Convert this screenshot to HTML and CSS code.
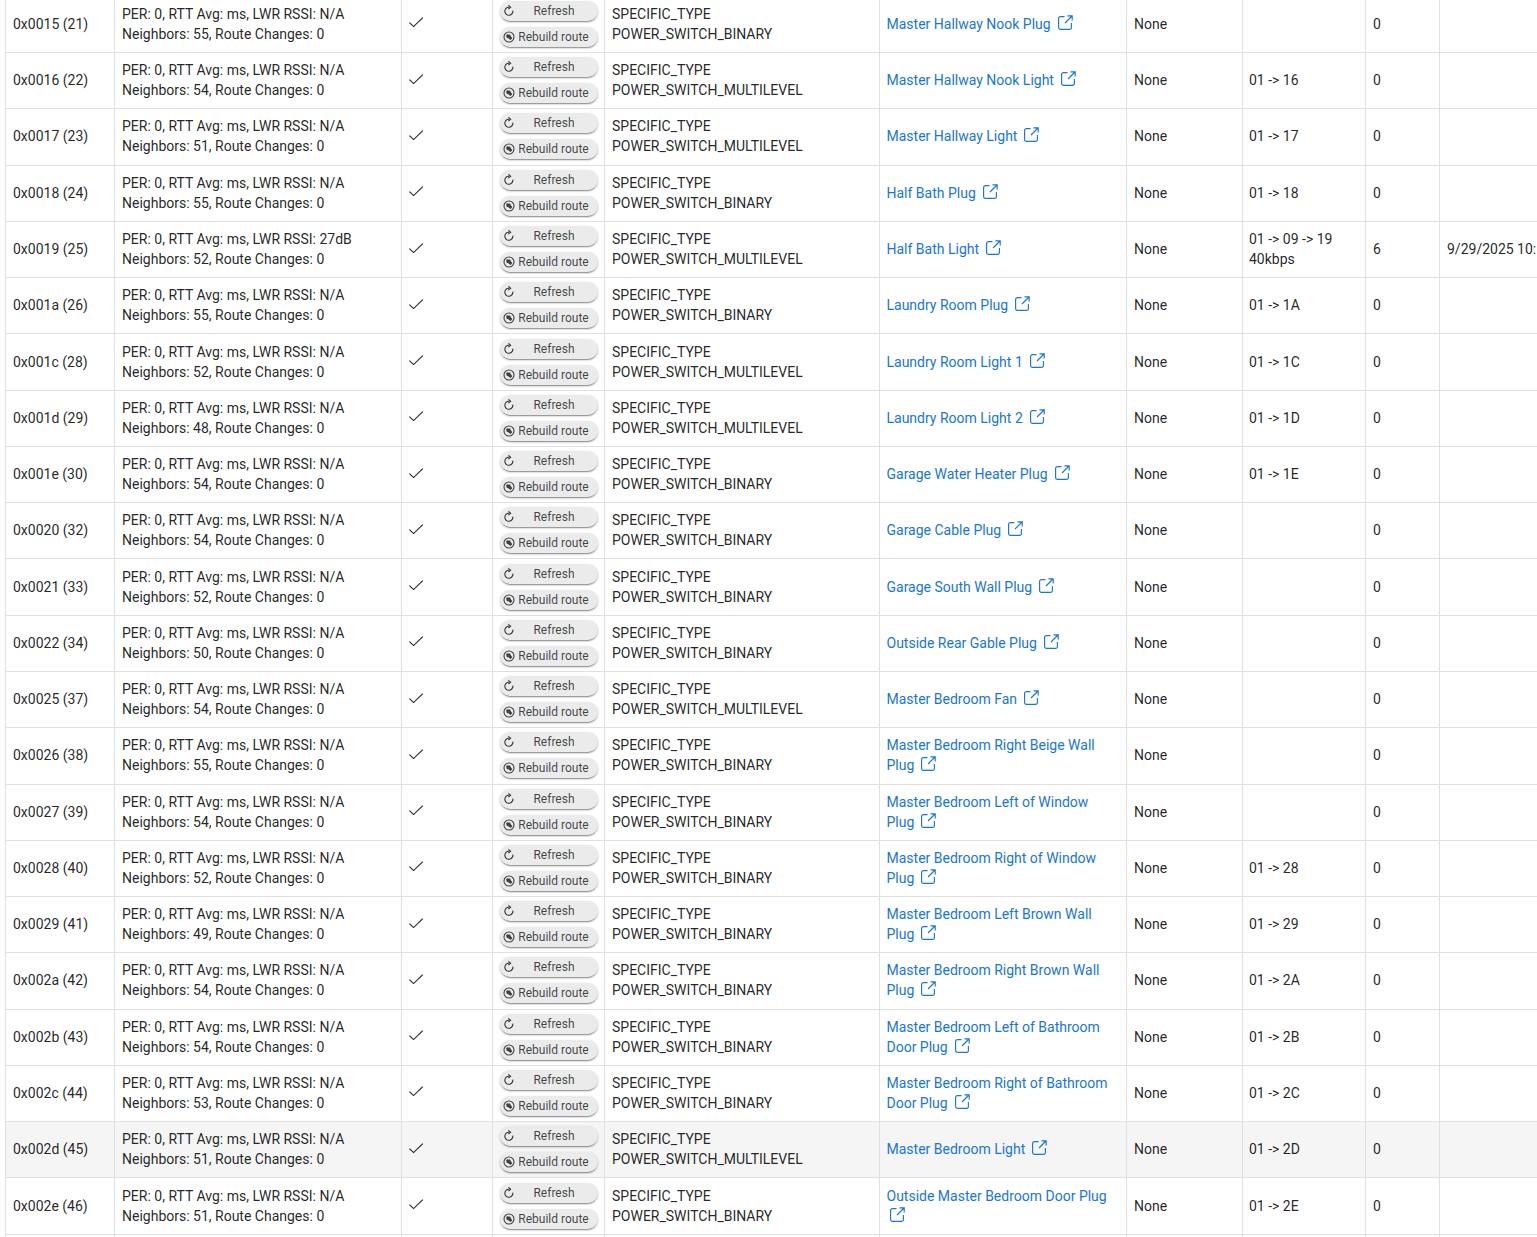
FILE: index.html
```html
<!DOCTYPE html>
<html lang="en">
<head>
<meta charset="utf-8">
<title>Z-Wave devices</title>
<link rel="stylesheet" href="styles.css">
</head>
<body>
<svg class="defs" width="0" height="0" aria-hidden="true">
  <symbol id="i-check" viewBox="0 0 16 16"><path d="M.4 8.6 4.6 12.6 13.8 3.6" fill="none" stroke="currentColor" stroke-width="1.1"/></symbol>
  <symbol id="i-refresh" viewBox="0 0 12 12"><path d="M9.8 5.6A4 4 0 1 1 6 2.3" fill="none" stroke="currentColor" stroke-width="1.1"/><path d="M5.4.4 7.6 2.3 5.4 4.1" fill="none" stroke="currentColor" stroke-width="1.1"/></symbol>
  <symbol id="i-build" viewBox="0 0 12 12"><circle cx="6" cy="6" r="5" fill="none" stroke="currentColor" stroke-width="1.1"/><path d="M2.9 4.4 4.3 3 5.2 3.9 5.6 3.2A1.9 1.9 0 0 1 7.7 5L9.4 7.2 7.4 9.1 5.2 7.2A2 2 0 0 1 3.1 5.5L3.9 5.2z" fill="currentColor"/></symbol>
  <symbol id="i-open" viewBox="0 0 15 15"><path d="M6.5 1.6H2.5A1.9 1.9 0 0 0 .6 3.5V12.5A1.9 1.9 0 0 0 2.5 14.4H11.5A1.9 1.9 0 0 0 13.4 12.5V8" fill="none" stroke="currentColor" stroke-width="1.15"/><path d="M7 8 14 1M9.5.8H14.2V5.5" fill="none" stroke="currentColor" stroke-width="1.15"/></symbol>
</svg>
<main class="viewport">
<table class="nodes">
<colgroup>
  <col class="c-id"><col class="c-stats"><col class="c-check"><col class="c-actions"><col class="c-type"><col class="c-name"><col class="c-sec"><col class="c-route"><col class="c-count"><col class="c-date">
</colgroup>
<tbody>
<tr><td>0x0015 (21)</td><td>PER: 0, RTT Avg: ms, LWR RSSI: N/A<br>Neighbors: 55, Route Changes: 0</td><td><svg class="check"><use href="#i-check"/></svg></td><td><div class="actions"><button class="btn"><svg class="ico ico-refresh"><use href="#i-refresh"/></svg><span class="lbl">Refresh</span></button><button class="btn"><svg class="ico"><use href="#i-build"/></svg><span class="lbl lbl-rebuild">Rebuild route</span></button></div></td><td>SPECIFIC_TYPE<br>POWER_SWITCH_BINARY</td><td class="name"><a href="#">Master Hallway Nook Plug <svg class="open"><use href="#i-open"/></svg></a></td><td>None</td><td class="route"></td><td>0</td><td></td></tr>
<tr><td>0x0016 (22)</td><td>PER: 0, RTT Avg: ms, LWR RSSI: N/A<br>Neighbors: 54, Route Changes: 0</td><td><svg class="check"><use href="#i-check"/></svg></td><td><div class="actions"><button class="btn"><svg class="ico ico-refresh"><use href="#i-refresh"/></svg><span class="lbl">Refresh</span></button><button class="btn"><svg class="ico"><use href="#i-build"/></svg><span class="lbl lbl-rebuild">Rebuild route</span></button></div></td><td>SPECIFIC_TYPE<br>POWER_SWITCH_MULTILEVEL</td><td class="name"><a href="#">Master Hallway Nook Light <svg class="open"><use href="#i-open"/></svg></a></td><td>None</td><td class="route">01 -&gt; 16</td><td>0</td><td></td></tr>
<tr><td>0x0017 (23)</td><td>PER: 0, RTT Avg: ms, LWR RSSI: N/A<br>Neighbors: 51, Route Changes: 0</td><td><svg class="check"><use href="#i-check"/></svg></td><td><div class="actions"><button class="btn"><svg class="ico ico-refresh"><use href="#i-refresh"/></svg><span class="lbl">Refresh</span></button><button class="btn"><svg class="ico"><use href="#i-build"/></svg><span class="lbl lbl-rebuild">Rebuild route</span></button></div></td><td>SPECIFIC_TYPE<br>POWER_SWITCH_MULTILEVEL</td><td class="name"><a href="#">Master Hallway Light <svg class="open"><use href="#i-open"/></svg></a></td><td>None</td><td class="route">01 -&gt; 17</td><td>0</td><td></td></tr>
<tr><td>0x0018 (24)</td><td>PER: 0, RTT Avg: ms, LWR RSSI: N/A<br>Neighbors: 55, Route Changes: 0</td><td><svg class="check"><use href="#i-check"/></svg></td><td><div class="actions"><button class="btn"><svg class="ico ico-refresh"><use href="#i-refresh"/></svg><span class="lbl">Refresh</span></button><button class="btn"><svg class="ico"><use href="#i-build"/></svg><span class="lbl lbl-rebuild">Rebuild route</span></button></div></td><td>SPECIFIC_TYPE<br>POWER_SWITCH_BINARY</td><td class="name"><a href="#">Half Bath Plug <svg class="open"><use href="#i-open"/></svg></a></td><td>None</td><td class="route">01 -&gt; 18</td><td>0</td><td></td></tr>
<tr><td>0x0019 (25)</td><td>PER: 0, RTT Avg: ms, LWR RSSI: 27dB<br>Neighbors: 52, Route Changes: 0</td><td><svg class="check"><use href="#i-check"/></svg></td><td><div class="actions"><button class="btn"><svg class="ico ico-refresh"><use href="#i-refresh"/></svg><span class="lbl">Refresh</span></button><button class="btn"><svg class="ico"><use href="#i-build"/></svg><span class="lbl lbl-rebuild">Rebuild route</span></button></div></td><td>SPECIFIC_TYPE<br>POWER_SWITCH_MULTILEVEL</td><td class="name"><a href="#">Half Bath Light <svg class="open"><use href="#i-open"/></svg></a></td><td>None</td><td class="route">01 -&gt; 09 -&gt; 19<br>40kbps</td><td>6</td><td>9/29/2025 10:</td></tr>
<tr><td>0x001a (26)</td><td>PER: 0, RTT Avg: ms, LWR RSSI: N/A<br>Neighbors: 55, Route Changes: 0</td><td><svg class="check"><use href="#i-check"/></svg></td><td><div class="actions"><button class="btn"><svg class="ico ico-refresh"><use href="#i-refresh"/></svg><span class="lbl">Refresh</span></button><button class="btn"><svg class="ico"><use href="#i-build"/></svg><span class="lbl lbl-rebuild">Rebuild route</span></button></div></td><td>SPECIFIC_TYPE<br>POWER_SWITCH_BINARY</td><td class="name"><a href="#">Laundry Room Plug <svg class="open"><use href="#i-open"/></svg></a></td><td>None</td><td class="route">01 -&gt; 1A</td><td>0</td><td></td></tr>
<tr><td>0x001c (28)</td><td>PER: 0, RTT Avg: ms, LWR RSSI: N/A<br>Neighbors: 52, Route Changes: 0</td><td><svg class="check"><use href="#i-check"/></svg></td><td><div class="actions"><button class="btn"><svg class="ico ico-refresh"><use href="#i-refresh"/></svg><span class="lbl">Refresh</span></button><button class="btn"><svg class="ico"><use href="#i-build"/></svg><span class="lbl lbl-rebuild">Rebuild route</span></button></div></td><td>SPECIFIC_TYPE<br>POWER_SWITCH_MULTILEVEL</td><td class="name"><a href="#">Laundry Room Light 1 <svg class="open"><use href="#i-open"/></svg></a></td><td>None</td><td class="route">01 -&gt; 1C</td><td>0</td><td></td></tr>
<tr><td>0x001d (29)</td><td>PER: 0, RTT Avg: ms, LWR RSSI: N/A<br>Neighbors: 48, Route Changes: 0</td><td><svg class="check"><use href="#i-check"/></svg></td><td><div class="actions"><button class="btn"><svg class="ico ico-refresh"><use href="#i-refresh"/></svg><span class="lbl">Refresh</span></button><button class="btn"><svg class="ico"><use href="#i-build"/></svg><span class="lbl lbl-rebuild">Rebuild route</span></button></div></td><td>SPECIFIC_TYPE<br>POWER_SWITCH_MULTILEVEL</td><td class="name"><a href="#">Laundry Room Light 2 <svg class="open"><use href="#i-open"/></svg></a></td><td>None</td><td class="route">01 -&gt; 1D</td><td>0</td><td></td></tr>
<tr><td>0x001e (30)</td><td>PER: 0, RTT Avg: ms, LWR RSSI: N/A<br>Neighbors: 54, Route Changes: 0</td><td><svg class="check"><use href="#i-check"/></svg></td><td><div class="actions"><button class="btn"><svg class="ico ico-refresh"><use href="#i-refresh"/></svg><span class="lbl">Refresh</span></button><button class="btn"><svg class="ico"><use href="#i-build"/></svg><span class="lbl lbl-rebuild">Rebuild route</span></button></div></td><td>SPECIFIC_TYPE<br>POWER_SWITCH_BINARY</td><td class="name"><a href="#">Garage Water Heater Plug <svg class="open"><use href="#i-open"/></svg></a></td><td>None</td><td class="route">01 -&gt; 1E</td><td>0</td><td></td></tr>
<tr><td>0x0020 (32)</td><td>PER: 0, RTT Avg: ms, LWR RSSI: N/A<br>Neighbors: 54, Route Changes: 0</td><td><svg class="check"><use href="#i-check"/></svg></td><td><div class="actions"><button class="btn"><svg class="ico ico-refresh"><use href="#i-refresh"/></svg><span class="lbl">Refresh</span></button><button class="btn"><svg class="ico"><use href="#i-build"/></svg><span class="lbl lbl-rebuild">Rebuild route</span></button></div></td><td>SPECIFIC_TYPE<br>POWER_SWITCH_BINARY</td><td class="name"><a href="#">Garage Cable Plug <svg class="open"><use href="#i-open"/></svg></a></td><td>None</td><td class="route"></td><td>0</td><td></td></tr>
<tr><td>0x0021 (33)</td><td>PER: 0, RTT Avg: ms, LWR RSSI: N/A<br>Neighbors: 52, Route Changes: 0</td><td><svg class="check"><use href="#i-check"/></svg></td><td><div class="actions"><button class="btn"><svg class="ico ico-refresh"><use href="#i-refresh"/></svg><span class="lbl">Refresh</span></button><button class="btn"><svg class="ico"><use href="#i-build"/></svg><span class="lbl lbl-rebuild">Rebuild route</span></button></div></td><td>SPECIFIC_TYPE<br>POWER_SWITCH_BINARY</td><td class="name"><a href="#">Garage South Wall Plug <svg class="open"><use href="#i-open"/></svg></a></td><td>None</td><td class="route"></td><td>0</td><td></td></tr>
<tr><td>0x0022 (34)</td><td>PER: 0, RTT Avg: ms, LWR RSSI: N/A<br>Neighbors: 50, Route Changes: 0</td><td><svg class="check"><use href="#i-check"/></svg></td><td><div class="actions"><button class="btn"><svg class="ico ico-refresh"><use href="#i-refresh"/></svg><span class="lbl">Refresh</span></button><button class="btn"><svg class="ico"><use href="#i-build"/></svg><span class="lbl lbl-rebuild">Rebuild route</span></button></div></td><td>SPECIFIC_TYPE<br>POWER_SWITCH_BINARY</td><td class="name"><a href="#">Outside Rear Gable Plug <svg class="open"><use href="#i-open"/></svg></a></td><td>None</td><td class="route"></td><td>0</td><td></td></tr>
<tr><td>0x0025 (37)</td><td>PER: 0, RTT Avg: ms, LWR RSSI: N/A<br>Neighbors: 54, Route Changes: 0</td><td><svg class="check"><use href="#i-check"/></svg></td><td><div class="actions"><button class="btn"><svg class="ico ico-refresh"><use href="#i-refresh"/></svg><span class="lbl">Refresh</span></button><button class="btn"><svg class="ico"><use href="#i-build"/></svg><span class="lbl lbl-rebuild">Rebuild route</span></button></div></td><td>SPECIFIC_TYPE<br>POWER_SWITCH_MULTILEVEL</td><td class="name"><a href="#">Master Bedroom Fan <svg class="open"><use href="#i-open"/></svg></a></td><td>None</td><td class="route"></td><td>0</td><td></td></tr>
<tr><td>0x0026 (38)</td><td>PER: 0, RTT Avg: ms, LWR RSSI: N/A<br>Neighbors: 55, Route Changes: 0</td><td><svg class="check"><use href="#i-check"/></svg></td><td><div class="actions"><button class="btn"><svg class="ico ico-refresh"><use href="#i-refresh"/></svg><span class="lbl">Refresh</span></button><button class="btn"><svg class="ico"><use href="#i-build"/></svg><span class="lbl lbl-rebuild">Rebuild route</span></button></div></td><td>SPECIFIC_TYPE<br>POWER_SWITCH_BINARY</td><td class="name"><a href="#">Master Bedroom Right Beige Wall Plug <svg class="open"><use href="#i-open"/></svg></a></td><td>None</td><td class="route"></td><td>0</td><td></td></tr>
<tr><td>0x0027 (39)</td><td>PER: 0, RTT Avg: ms, LWR RSSI: N/A<br>Neighbors: 54, Route Changes: 0</td><td><svg class="check"><use href="#i-check"/></svg></td><td><div class="actions"><button class="btn"><svg class="ico ico-refresh"><use href="#i-refresh"/></svg><span class="lbl">Refresh</span></button><button class="btn"><svg class="ico"><use href="#i-build"/></svg><span class="lbl lbl-rebuild">Rebuild route</span></button></div></td><td>SPECIFIC_TYPE<br>POWER_SWITCH_BINARY</td><td class="name"><a href="#">Master Bedroom Left of Window Plug <svg class="open"><use href="#i-open"/></svg></a></td><td>None</td><td class="route"></td><td>0</td><td></td></tr>
<tr><td>0x0028 (40)</td><td>PER: 0, RTT Avg: ms, LWR RSSI: N/A<br>Neighbors: 52, Route Changes: 0</td><td><svg class="check"><use href="#i-check"/></svg></td><td><div class="actions"><button class="btn"><svg class="ico ico-refresh"><use href="#i-refresh"/></svg><span class="lbl">Refresh</span></button><button class="btn"><svg class="ico"><use href="#i-build"/></svg><span class="lbl lbl-rebuild">Rebuild route</span></button></div></td><td>SPECIFIC_TYPE<br>POWER_SWITCH_BINARY</td><td class="name"><a href="#">Master Bedroom Right of Window Plug <svg class="open"><use href="#i-open"/></svg></a></td><td>None</td><td class="route">01 -&gt; 28</td><td>0</td><td></td></tr>
<tr><td>0x0029 (41)</td><td>PER: 0, RTT Avg: ms, LWR RSSI: N/A<br>Neighbors: 49, Route Changes: 0</td><td><svg class="check"><use href="#i-check"/></svg></td><td><div class="actions"><button class="btn"><svg class="ico ico-refresh"><use href="#i-refresh"/></svg><span class="lbl">Refresh</span></button><button class="btn"><svg class="ico"><use href="#i-build"/></svg><span class="lbl lbl-rebuild">Rebuild route</span></button></div></td><td>SPECIFIC_TYPE<br>POWER_SWITCH_BINARY</td><td class="name"><a href="#">Master Bedroom Left Brown Wall Plug <svg class="open"><use href="#i-open"/></svg></a></td><td>None</td><td class="route">01 -&gt; 29</td><td>0</td><td></td></tr>
<tr><td>0x002a (42)</td><td>PER: 0, RTT Avg: ms, LWR RSSI: N/A<br>Neighbors: 54, Route Changes: 0</td><td><svg class="check"><use href="#i-check"/></svg></td><td><div class="actions"><button class="btn"><svg class="ico ico-refresh"><use href="#i-refresh"/></svg><span class="lbl">Refresh</span></button><button class="btn"><svg class="ico"><use href="#i-build"/></svg><span class="lbl lbl-rebuild">Rebuild route</span></button></div></td><td>SPECIFIC_TYPE<br>POWER_SWITCH_BINARY</td><td class="name"><a href="#">Master Bedroom Right Brown Wall Plug <svg class="open"><use href="#i-open"/></svg></a></td><td>None</td><td class="route">01 -&gt; 2A</td><td>0</td><td></td></tr>
<tr><td>0x002b (43)</td><td>PER: 0, RTT Avg: ms, LWR RSSI: N/A<br>Neighbors: 54, Route Changes: 0</td><td><svg class="check"><use href="#i-check"/></svg></td><td><div class="actions"><button class="btn"><svg class="ico ico-refresh"><use href="#i-refresh"/></svg><span class="lbl">Refresh</span></button><button class="btn"><svg class="ico"><use href="#i-build"/></svg><span class="lbl lbl-rebuild">Rebuild route</span></button></div></td><td>SPECIFIC_TYPE<br>POWER_SWITCH_BINARY</td><td class="name"><a href="#">Master Bedroom Left of Bathroom Door Plug <svg class="open"><use href="#i-open"/></svg></a></td><td>None</td><td class="route">01 -&gt; 2B</td><td>0</td><td></td></tr>
<tr><td>0x002c (44)</td><td>PER: 0, RTT Avg: ms, LWR RSSI: N/A<br>Neighbors: 53, Route Changes: 0</td><td><svg class="check"><use href="#i-check"/></svg></td><td><div class="actions"><button class="btn"><svg class="ico ico-refresh"><use href="#i-refresh"/></svg><span class="lbl">Refresh</span></button><button class="btn"><svg class="ico"><use href="#i-build"/></svg><span class="lbl lbl-rebuild">Rebuild route</span></button></div></td><td>SPECIFIC_TYPE<br>POWER_SWITCH_BINARY</td><td class="name"><a href="#">Master Bedroom Right of Bathroom Door Plug <svg class="open"><use href="#i-open"/></svg></a></td><td>None</td><td class="route">01 -&gt; 2C</td><td>0</td><td></td></tr>
<tr class="hover"><td>0x002d (45)</td><td>PER: 0, RTT Avg: ms, LWR RSSI: N/A<br>Neighbors: 51, Route Changes: 0</td><td><svg class="check"><use href="#i-check"/></svg></td><td><div class="actions"><button class="btn"><svg class="ico ico-refresh"><use href="#i-refresh"/></svg><span class="lbl">Refresh</span></button><button class="btn"><svg class="ico"><use href="#i-build"/></svg><span class="lbl lbl-rebuild">Rebuild route</span></button></div></td><td>SPECIFIC_TYPE<br>POWER_SWITCH_MULTILEVEL</td><td class="name"><a href="#">Master Bedroom Light <svg class="open"><use href="#i-open"/></svg></a></td><td>None</td><td class="route">01 -&gt; 2D</td><td>0</td><td></td></tr>
<tr><td>0x002e (46)</td><td>PER: 0, RTT Avg: ms, LWR RSSI: N/A<br>Neighbors: 51, Route Changes: 0</td><td><svg class="check"><use href="#i-check"/></svg></td><td><div class="actions"><button class="btn"><svg class="ico ico-refresh"><use href="#i-refresh"/></svg><span class="lbl">Refresh</span></button><button class="btn"><svg class="ico"><use href="#i-build"/></svg><span class="lbl lbl-rebuild">Rebuild route</span></button></div></td><td>SPECIFIC_TYPE<br>POWER_SWITCH_BINARY</td><td class="name"><a href="#">Outside Master Bedroom Door Plug <svg class="open"><use href="#i-open"/></svg></a></td><td>None</td><td class="route">01 -&gt; 2E</td><td>0</td><td></td></tr>
<tr><td></td><td></td><td></td><td></td><td></td><td></td><td></td><td></td><td></td><td></td></tr>
</tbody>
</table>
</main>
</body>
</html>
```

FILE: styles.css
```css
html, body {
  margin: 0;
  height: 100%;
  overflow: hidden;
  background: #fff;
}

.defs {
  display: block;
}

.viewport {
  height: 1237px;
  overflow: hidden;
  padding-left: 5px;
}

.nodes {
  margin-top: -4.2px;
  width: 1634px;
  table-layout: fixed;
  border-collapse: collapse;
  font: 14px/20px Roboto, "Liberation Sans", sans-serif;
  color: rgba(0, 0, 0, 0.87);
}

.c-id { width: 109px; }
.c-stats { width: 287px; }
.c-check { width: 91px; }
.c-actions { width: 112px; }
.c-type { width: 275px; }
.c-name { width: 247px; }
.c-sec { width: 116px; }
.c-route { width: 123px; }
.c-count { width: 74px; }
.c-date { width: 200px; }

.nodes tr {
  height: 56.27px;
}

.nodes td {
  padding: 0 16px 1px 7px;
  border: 1px solid #e0e0e0;
  vertical-align: middle;
  white-space: normal;
}

.nodes td.name {
  padding-left: 6.5px;
}

.nodes td.route {
  padding-left: 6px;
}

.nodes .hover td {
  background: #f5f5f5;
}

.check {
  display: block;
  width: 16px;
  height: 16px;
  margin-top: -3px;
}

.actions {
  display: flex;
  flex-direction: column;
  gap: 6px;
  margin: 0 -9px 0 0;
}

.btn {
  display: flex;
  align-items: center;
  width: 98px;
  height: 20px;
  padding: 0 5px 0 3px;
  border: 0;
  border-radius: 10px;
  background: #ebebeb;
  box-shadow: 0 2px 1px -1px rgba(0, 0, 0, 0.28), 0 1px 2px rgba(0, 0, 0, 0.18), 0 1px 3px rgba(0, 0, 0, 0.1);
  font: 12px/20px Roboto, "Liberation Sans", sans-serif;
  color: rgba(0, 0, 0, 0.72);
}

.ico {
  flex: none;
  width: 12px;
  height: 12px;
}

.ico-refresh {
  color: rgba(0, 0, 0, 0.8);
}

.lbl {
  flex: 1;
  text-align: center;
  white-space: nowrap;
}

.lbl-rebuild {
  padding-right: 1px;
}

.nodes a {
  color: #1976d2;
  text-decoration: none;
}

.open {
  display: inline-block;
  width: 15px;
  height: 15px;
  margin-left: 3.5px;
  vertical-align: -1px;
}
```
